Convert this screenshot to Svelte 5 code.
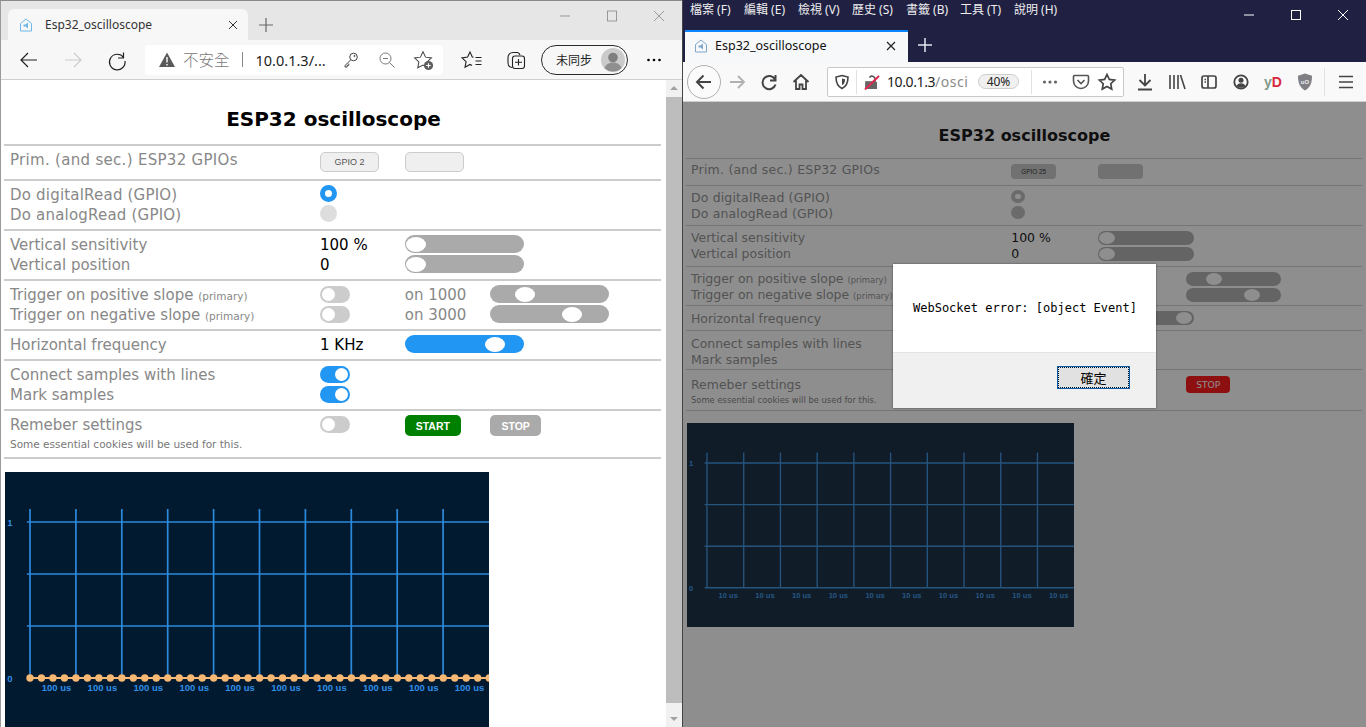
<script>
  const edgeCfg = {
    cls: 'edge', gpio: 'GPIO 2', radio: 'blue', unit: '100 us', dots: true,
    freq: '1 KHz', freqOn: true, freqAt: 80, stopCls: 'stop-off'
  };
  const foxCfg = {
    cls: 'fox', gpio: 'GPIO 25', radio: 'grey', unit: '10 us', dots: false,
    freq: '', freqOn: false, freqAt: 97, stopCls: 'stop-on'
  };

  const verticals = Array.from({ length: 10 }, (_, i) => 25 + i * 45.9);
  const levels = [50, 102, 154, 206];
  const samples = Array.from({ length: 41 }, (_, i) => 25 + i * 11.48);
  const starPath = 'M12 3l2.8 5.9 6.4.8-4.7 4.4 1.2 6.4L12 17.4l-5.7 3.1 1.2-6.4-4.7-4.4 6.4-.8z';
  const menus = ['檔案 (F)', '編輯 (E)', '檢視 (V)', '歷史 (S)', '書籤 (B)', '工具 (T)', '說明 (H)'];
</script>

{#snippet favicon(tone)}
  <svg class="fav" viewBox="0 0 14 14" width="14" height="14" fill="none">
    <path d="M1.5 5.5L7 1l5.5 4.5V13h-11z" stroke={tone} />
    <path d="M4.5 6.5h2l2.5-2v6l-2.5-2h-2z" fill={tone} />
  </svg>
{/snippet}

{#snippet slider(at, on = false)}
  <div class="slider" class:on><span class="thumb" style="margin-left:{at}px"></span></div>
{/snippet}

{#snippet toggle(on = false)}
  <div class="toggle" class:on><span></span></div>
{/snippet}

{#snippet page(cfg)}
  <div class="sheet {cfg.cls}">
    <h1>ESP32 oscilloscope</h1>
    <div class="rows">
      <div class="row first">
        <span class="lab caps">Prim. (and sec.) ESP32 GPIOs</span>
        <button class="gpio val">{cfg.gpio}</button>
        <button class="gpio mid"></button>
      </div>
      <div class="row reads">
        <span class="lab caps2">Do digitalRead (GPIO)</span>
        <span class="radio val sel {cfg.radio}"></span>
        <span class="lab caps2">Do analogRead (GPIO)</span>
        <span class="radio val {cfg.radio}"></span>
      </div>
      <div class="row tall">
        <span class="lab">Vertical sensitivity</span>
        <span class="val dark">100 %</span>
        <div class="mid">{@render slider(1)}</div>
        <span class="lab">Vertical position</span>
        <span class="val dark">0</span>
        <div class="mid">{@render slider(1)}</div>
      </div>
      <div class="row">
        <span class="lab">Trigger on positive slope <small>(primary)</small></span>
        <div class="val">{@render toggle()}</div>
        <span class="mid word">on 1000</span>
        <div class="far">{@render slider(25)}</div>
        <span class="lab">Trigger on negative slope <small>(primary)</small></span>
        <div class="val">{@render toggle()}</div>
        <span class="mid word">on 3000</span>
        <div class="far">{@render slider(72)}</div>
      </div>
      <div class="row tall">
        <span class="lab">Horizontal frequency</span>
        <span class="val dark">{cfg.freq}</span>
        <div class="mid">{@render slider(cfg.freqAt, cfg.freqOn)}</div>
      </div>
      <div class="row">
        <span class="lab">Connect samples with lines</span>
        <div class="val">{@render toggle(true)}</div>
        <span class="lab">Mark samples</span>
        <div class="val">{@render toggle(true)}</div>
      </div>
      <div class="row last">
        <span class="lab">Remeber settings</span>
        <div class="val">{@render toggle()}</div>
        <div class="mid"><button class="cmd start">START</button></div>
        <div class="far"><button class="cmd {cfg.stopCls}">STOP</button></div>
        <span class="lab note">Some essential cookies will be used for this.</span>
      </div>
      <div class="row closing"></div>
    </div>

    <svg class="scope" width="484" height="256" viewBox="0 0 484 256">
      {#each verticals as x}
        <line x1={x} x2={x} y1="37" y2="206" />
      {/each}
      {#each levels as y}
        <line x1="22" x2="484" y1={y} y2={y} />
      {/each}
      <text x="5" y="53.5" class="axis" text-anchor="middle">1</text>
      <text x="5" y="209.5" class="axis" text-anchor="middle">0</text>
      {#each verticals as x}
        <text x={x + 26.5} y="219" class="axis" text-anchor="middle">{cfg.unit}</text>
      {/each}
      {#if cfg.dots}
        <line class="trace" x1="25" x2="484" y1="206" y2="206" />
        {#each samples as x}
          <circle cx={x} cy="206" r="3.7" />
        {/each}
      {/if}
    </svg>
  </div>
{/snippet}

<div class="desktop">
  <section class="edge-win">
    <div class="edge-tabs">
      <div class="edge-tab">
        {@render favicon('#6bb8e8')}
        <span class="edge-title">Esp32_oscilloscope</span>
        <svg class="edge-close" width="10" height="10" viewBox="0 0 10 10"><path d="M1 1l8 8M9 1l-8 8" stroke="#333" fill="none" /></svg>
      </div>
      <svg class="edge-plus" width="14" height="14" viewBox="0 0 14 14"><path d="M7 0v14M0 7h14" stroke="#666" stroke-width="1.2" fill="none" /></svg>
      <div class="caption">
        <svg width="12" height="12" viewBox="0 0 12 12"><path d="M1 6h10" stroke="#999" fill="none" /></svg>
        <svg width="12" height="12" viewBox="0 0 12 12"><rect x="1.5" y="1" width="9" height="10" stroke="#999" fill="none" /></svg>
        <svg width="12" height="12" viewBox="0 0 12 12"><path d="M1 1l10 10M11 1L1 11" stroke="#999" fill="none" /></svg>
      </div>
    </div>

    <div class="edge-bar">
      <span class="slot"><svg width="24" height="24" viewBox="0 0 24 24"><path d="M20 12H4M11 5l-7 7 7 7" stroke="#222" stroke-width="1.2" fill="none" /></svg></span>
      <span class="slot"><svg width="24" height="24" viewBox="0 0 24 24"><path d="M4 12h16M13 5l7 7-7 7" stroke="#ccc" stroke-width="1.2" fill="none" /></svg></span>
      <span class="slot"><svg width="24" height="24" viewBox="0 0 24 24"><path d="M18.5 4.5v5.5H13M18.6 9.5A7.8 7.8 0 1 0 20 13" stroke="#222" stroke-width="1.2" fill="none" /></svg></span>
      <div class="edge-addr">
        <svg class="warn" width="16" height="15" viewBox="0 0 16 15"><path d="M8 .5L16 15H0z" fill="#595959" /><path d="M8 5v5.5M8 12v1.5" stroke="#fff" stroke-width="1.4" fill="none" /></svg>
        <span class="unsafe">不安全</span>
        <span class="pipe"></span>
        <span class="url">10.0.1.3/...</span>
        <span class="addr-icon"><svg width="18" height="18" viewBox="0 0 18 18" fill="none" stroke="#444"><circle cx="11.5" cy="6" r="3.8" /><path d="M8.8 8.8L3 14.5V16h2.2v-1.7h1.6v-1.7" /><circle cx="12.5" cy="5" r=".6" /></svg></span>
        <span class="addr-icon"><svg width="18" height="18" viewBox="0 0 18 18" fill="none" stroke="#777"><circle cx="7.5" cy="7.5" r="5.5" /><path d="M11.5 11.5l5 5M5 7.5h5" /></svg></span>
        <span class="addr-icon"><svg width="22" height="22" viewBox="0 0 24 24"><path d={starPath} fill="none" stroke="#444" stroke-width="1.1" /><circle cx="18" cy="18" r="5" fill="#5e5e5e" /><path d="M18 15.5v5M15.5 18h5" stroke="#fff" stroke-width="1.2" /></svg></span>
      </div>
      <span class="slot"><svg width="24" height="24" viewBox="0 0 24 24" fill="none" stroke="#222" stroke-width="1.1"><path d="M13.5 9.300L12.300 9.100 10 4 7.600 9.100 2 9.900l4.100 3.800L5 19.300l5-2.800 2 1.100" /><path d="M15.500 9.500h6M15.500 13h6M15.500 16.500h6" /></svg></span>
      <span class="slot"><svg width="24" height="24" viewBox="0 0 24 24" fill="none" stroke="#222" stroke-width="1.1"><path d="M8 19.5a4.5 4.5 0 0 1-4-4.5V9.5A5 5 0 0 1 9 4.5h4.5A3.5 3.5 0 0 1 16 7" /><rect x="8.5" y="8" width="12" height="12.5" rx="2.5" /><path d="M14.5 11v6.5M11 14.2h7" /></svg></span>
      <div class="pill">
        <span>未同步</span>
        <svg width="24" height="24" viewBox="0 0 24 24"><circle cx="12" cy="12" r="12" fill="#cbcbcb" /><circle cx="12" cy="9.5" r="4.8" fill="#7f7f7f" /><path d="M3.5 20c1.5-4 5-5.5 8.5-5.5s7 1.500 8.500 5.500a12 12 0 0 1-17 0z" fill="#8f8f8f" /></svg>
      </div>
      <span class="slot more"><svg width="16" height="4" viewBox="0 0 16 4"><circle cx="2.500" cy="2" r="1.300" /><circle cx="8" cy="2" r="1.300" /><circle cx="13.500" cy="2" r="1.300" /></svg></span>
    </div>

    <div class="edge-body">
      {@render page(edgeCfg)}
      <div class="scrollbar">
        <svg width="16" height="16" viewBox="0 0 16 16"><path d="M4 10l4-4 4 4z" fill="#a3a3a3" /></svg>
        <span class="scroll-thumb"></span>
        <svg width="16" height="16" viewBox="0 0 16 16"><path d="M4 6l4 4 4-4z" fill="#a3a3a3" /></svg>
      </div>
    </div>
  </section>

  <section class="fox-win">
    <div class="fox-menu">
      {#each menus as m}
        <span>{m}</span>
      {/each}
      <div class="caption fox-caption">
        <svg width="12" height="12" viewBox="0 0 12 12"><path d="M1 6h10" stroke="#fff" fill="none" /></svg>
        <svg width="12" height="12" viewBox="0 0 12 12"><rect x="1.500" y="1.500" width="9" height="9" stroke="#fff" fill="none" /></svg>
        <svg width="12" height="12" viewBox="0 0 12 12"><path d="M1 1l10 10M11 1L1 11" stroke="#fff" fill="none" /></svg>
      </div>
    </div>

    <div class="fox-tabs">
      <div class="fox-tab">
        {@render favicon('#7fa8cc')}
        <span class="fox-title">Esp32_oscilloscope</span>
        <svg class="fox-close" width="10" height="10" viewBox="0 0 10 10"><path d="M1 1l8 8M9 1l-8 8" stroke="#222" stroke-width="1.200" fill="none" /></svg>
      </div>
      <svg class="fox-plus" width="14" height="14" viewBox="0 0 14 14"><path d="M7 0v14M0 7h14" stroke="#e6e6ee" stroke-width="1.500" fill="none" /></svg>
    </div>

    <div class="fox-bar">
      <span class="back"><svg width="20" height="20" viewBox="0 0 20 20"><path d="M17 10H3M9.500 3.500L3 10l6.500 6.500" stroke="#444" stroke-width="2" fill="none" /></svg></span>
      <span class="fslot"><svg width="18" height="18" viewBox="0 0 18 18"><path d="M2 9h14M10 3l6 6-6 6" stroke="#b1b1b3" stroke-width="1.800" fill="none" /></svg></span>
      <span class="fslot"><svg width="18" height="18" viewBox="0 0 18 18"><path d="M15.500 2v5.500H10M15 6.500A6.600 6.600 0 1 0 15.500 11.500" stroke="#444" stroke-width="2" fill="none" /></svg></span>
      <span class="fslot"><svg width="18" height="18" viewBox="0 0 18 18"><path d="M1.500 9L9 2l7.500 7M4 7.500V16h3.500v-4.500h3V16H14V7.500" stroke="#444" stroke-width="1.800" fill="none" /></svg></span>
      <div class="fox-addr">
        <span class="shield"><svg width="16" height="16" viewBox="0 0 16 16"><path d="M8 1.500l6 1.500c0 6-1.500 9.500-6 11.500C3.500 12.500 2 9 2 3z" fill="none" stroke="#444" stroke-width="1.600" /><path d="M8 4.500l3 .8c0 3-.8 4.800-3 6z" fill="#444" /></svg></span>
        <span class="addr-sep"></span>
        <span class="lock"><svg width="16" height="16" viewBox="0 0 16 16"><path d="M2 15V8h9V5a3 3 0 0 0-5.500-1.500" fill="none" stroke="#555" stroke-width="1.600" /><rect x="2" y="8" width="11" height="7" fill="#666" /><path d="M1 15.500L15 2" stroke="#e22850" stroke-width="2" fill="none" /></svg></span>
        <span class="host">10.0.1.3<em>/osci</em></span>
        <span class="pct">40%</span>
        <span class="addr-sep tail"></span>
        <span class="fdots"><svg width="16" height="4" viewBox="0 0 16 4" fill="#666"><circle cx="2.500" cy="2" r="1.600" /><circle cx="8" cy="2" r="1.600" /><circle cx="13.500" cy="2" r="1.600" /></svg></span>
        <span class="aslot"><svg width="18" height="18" viewBox="0 0 18 18" fill="none" stroke="#555" stroke-width="1.600"><path d="M2.500 2.500h13a1 1 0 0 1 1 1V8a7.500 7.500 0 0 1-15 0V3.500a1 1 0 0 1 1-1z" /><path d="M5.500 7L9 10.500 12.500 7" /></svg></span>
        <span class="aslot"><svg width="20" height="20" viewBox="0 0 24 24"><path d={starPath} fill="none" stroke="#444" stroke-width="2" /></svg></span>
      </div>
      <span class="tool dl"><svg width="18" height="18" viewBox="0 0 18 18" fill="none" stroke="#444" stroke-width="1.800"><path d="M9 1v11M3.500 7L9 12.500 14.500 7M2 16.500h14" /></svg></span>
      <span class="tool"><svg width="18" height="18" viewBox="0 0 18 18" fill="none" stroke="#444" stroke-width="1.600"><path d="M2 2v14M6 2v14M10 2v14M12.500 2l4.500 14" /></svg></span>
      <span class="tool"><svg width="18" height="18" viewBox="0 0 18 18" fill="none" stroke="#444" stroke-width="1.700"><rect x="2" y="3" width="14" height="12" rx="2" /><path d="M8 3v12M4.500 6.500H6M4.500 9H6" /></svg></span>
      <span class="tool"><svg width="16" height="16" viewBox="0 0 16 16"><circle cx="8" cy="8" r="6.700" fill="none" stroke="#444" stroke-width="1.800" /><circle cx="8" cy="6.300" r="2.500" fill="#444" /><path d="M3.500 12c1-2 2.800-2.700 4.500-2.700s3.500.7 4.500 2.700c-2.500 2.300-6.500 2.300-9 0z" fill="#444" /></svg></span>
      <span class="tool yd"><b class="y">y</b><b class="d">D</b></span>
      <span class="tool"><svg width="16" height="18" viewBox="0 0 16 18"><path d="M8 .500l7 2.200c0 7-1.500 11.500-7 14.800C2.500 14.200 1 9.700 1 2.700z" fill="#808084" /><text x="8" y="10.500" class="ub" text-anchor="middle">uO</text></svg></span>
      <span class="tool-sep"></span>
      <span class="tool burger"><svg width="16" height="14" viewBox="0 0 16 14"><path d="M1 1.500h14M1 7h14M1 12.500h14" stroke="#444" stroke-width="1.600" fill="none" /></svg></span>
    </div>

    <div class="fox-body">
      {@render page(foxCfg)}
      <div class="dim">
        <div class="dialog">
          <div class="msg">WebSocket error: [object Event]</div>
          <div class="dialog-foot"><button class="ok">確定</button></div>
        </div>
      </div>
    </div>
  </section>
</div>

<style>
  :global(body) {
    margin: 0;
    background: #333;
  }

  .desktop {
    width: 1366px;
    height: 727px;
    display: flex;
    overflow: hidden;
    font-family: "Noto Sans", "Noto Sans CJK TC", sans-serif;
  }

  svg {
    display: block;
    flex: none;
  }

  /* edge window */
  .edge-win {
    width: 682px;
    height: 727px;
    flex: none;
    display: flex;
    flex-direction: column;
    box-sizing: border-box;
    border-top: 1px solid #8a8a8a;
    border-left: 1px solid #9a9a9a;
  }

  .edge-tabs {
    height: 39px;
    flex: none;
    box-sizing: border-box;
    background: #e6e6e6;
    display: flex;
    align-items: flex-end;
    padding-left: 7px;
  }

  .edge-tab {
    width: 240px;
    height: 31px;
    background: #f7f7f7;
    border-radius: 6px 6px 0 0;
    display: flex;
    align-items: center;
    box-sizing: border-box;
    padding: 0 10px 0 11px;
    font-size: 12px;
    color: #333;
  }

  .edge-title {
    margin-left: 12px;
    flex: 1;
  }

  .edge-plus {
    margin: 0 0 8px 11px;
  }

  .caption {
    margin-left: auto;
    align-self: flex-start;
    display: flex;
    gap: 35px;
    padding: 9px 17px 0 0;
  }

  .edge-bar {
    height: 40px;
    flex: none;
    box-sizing: border-box;
    background: #f7f7f7;
    border-bottom: 1px solid #cfcfcf;
    display: flex;
    align-items: center;
    padding-left: 6px;
  }

  .slot {
    width: 44px;
    height: 30px;
    flex: none;
    display: flex;
    align-items: center;
    justify-content: center;
  }

  .edge-addr {
    width: 298px;
    height: 30px;
    margin: 0 7px 0 6px;
    flex: none;
    background: #fff;
    border-radius: 4px;
    display: flex;
    align-items: center;
    padding-left: 14px;
    box-sizing: border-box;
  }

  .unsafe {
    margin-left: 8px;
    font-size: 15.500px;
    color: #777;
    font-weight: 300;
  }

  .pipe {
    width: 1px;
    height: 15px;
    background: #888;
    margin: 0 13px 0 12px;
  }

  .url {
    font-size: 14.500px;
    color: #222;
    width: 77px;
    white-space: nowrap;
  }

  .addr-icon {
    width: 36px;
    flex: none;
    display: flex;
    justify-content: center;
  }

  .pill {
    width: 87px;
    height: 30px;
    flex: none;
    box-sizing: border-box;
    margin-left: 3px;
    border: 1.5px solid #2a2a2a;
    border-radius: 15px;
    display: flex;
    align-items: center;
    padding-left: 14px;
    gap: 9px;
    font-size: 12px;
    color: #222;
    white-space: nowrap;
  }

  .more {
    margin-left: 4px;
  }

  .edge-body {
    flex: 1;
    display: flex;
    min-height: 0;
    background: #fff;
  }

  .edge-body .sheet {
    flex: 1;
    min-width: 0;
  }

  .scrollbar {
    width: 16px;
    flex: none;
    background: #f1f1f1;
    display: flex;
    flex-direction: column;
  }

  .scroll-thumb {
    flex: 1;
    background: #bdbdbd;
    margin: 1px 0 8px;
  }

  /* firefox window */
  .fox-win {
    width: 684px;
    height: 727px;
    flex: none;
    display: flex;
    flex-direction: column;
    border-left: 1px solid #444;
    box-sizing: border-box;
  }

  .fox-menu {
    height: 30px;
    flex: none;
    background: #1f2042;
    color: #eee;
    font-size: 12px;
    display: flex;
    gap: 13px;
    padding-left: 7px;
    padding-top: 2px;
    box-sizing: border-box;
    line-height: 16px;
  }

  .fox-menu > span {
    width: 41px;
    white-space: nowrap;
  }

  .fox-caption {
    padding: 7px 17px 0 0;
    gap: 35px;
  }

  .fox-tabs {
    height: 32px;
    flex: none;
    background: #1f2042;
    display: flex;
    align-items: center;
    padding-left: 2px;
  }

  .fox-tab {
    width: 223px;
    height: 32px;
    background: #f7f8f9;
    border-top: 2px solid #0a84ff;
    box-sizing: border-box;
    display: flex;
    align-items: center;
    padding: 0 12px 3px 9px;
    font-size: 12.500px;
    color: #111;
  }

  .fox-title {
    margin-left: 7px;
    flex: 1;
  }

  .fox-plus {
    margin: 0 0 2px 10px;
  }

  .fox-bar {
    height: 40px;
    flex: none;
    box-sizing: border-box;
    background: #f9f9fa;
    border-bottom: 1px solid #cfcfd1;
    display: flex;
    align-items: center;
    padding-left: 4px;
  }

  .back {
    width: 34px;
    height: 34px;
    flex: none;
    box-sizing: border-box;
    border: 1px solid #b1b1b3;
    border-radius: 50%;
    display: flex;
    align-items: center;
    justify-content: center;
    background: #fbfbfb;
  }

  .fslot {
    width: 32px;
    flex: none;
    display: flex;
    justify-content: center;
  }

  .fox-addr {
    width: 297px;
    height: 30px;
    flex: none;
    margin-left: 10px;
    box-sizing: border-box;
    background: #fff;
    border: 1px solid #c8c8ca;
    border-radius: 2px;
    display: flex;
    align-items: center;
  }

  .fox-addr > span {
    flex: none;
  }

  .shield {
    width: 28px;
    display: flex;
    justify-content: center;
  }

  .addr-sep {
    width: 1px;
    height: 24px;
    background: #e2e2e3;
  }

  .lock {
    margin-left: 7px;
    width: 22px;
  }

  .host {
    font-size: 14px;
    letter-spacing: -0.4px;
    color: #222;
    width: 83px;
    margin-right: 8px;
    white-space: nowrap;
    overflow: hidden;
    margin-left: 1px;
  }

  .host em {
    font-style: normal;
    letter-spacing: 0.5px;
    color: #8a8a8a;
  }

  .pct {
    width: 41px;
    height: 15px;
    box-sizing: border-box;
    line-height: 13px;
    text-align: center;
    border: 1px solid #ccc;
    border-radius: 8px;
    background: #f0f0f0;
    font-size: 12px;
    color: #222;
  }

  .tail {
    margin-left: 12px;
  }

  .fdots {
    width: 36px;
    display: flex;
    justify-content: center;
  }

  .aslot {
    width: 26px;
    display: flex;
    justify-content: center;
  }

  .tool {
    width: 32px;
    flex: none;
    display: flex;
    justify-content: center;
  }

  .dl {
    margin-left: 5px;
  }

  .yd {
    font: bold 14px "Liberation Sans", sans-serif;
  }

  .y {
    color: #7f9a8a;
  }

  .d {
    color: #d9283c;
  }

  .ub {
    font: bold 6px "Liberation Sans", sans-serif;
    fill: #eee;
  }

  .tool-sep {
    width: 1px;
    height: 28px;
    background: #e2e2e3;
    margin: 0 5px 0 3px;
  }

  .burger {
    width: 32px;
  }

  .fox-body {
    flex: 1;
    min-height: 0;
    position: relative;
    background: #fff;
    overflow: hidden;
  }

  .dim {
    position: absolute;
    inset: 0;
    background: rgba(29, 29, 29, 0.5);
  }

  .dialog {
    position: absolute;
    left: 210px;
    top: 162px;
    width: 263px;
    height: 144px;
    background: #fff;
    box-shadow: 0 0 2px rgba(0, 0, 0, 0.5);
    display: flex;
    flex-direction: column;
  }

  .msg {
    flex: 1;
    padding: 36px 0 0 20px;
    font: 12px/16px "DejaVu Sans Mono", monospace;
    color: #000;
    box-sizing: border-box;
    white-space: nowrap;
  }

  .dialog-foot {
    height: 56px;
    flex: none;
    box-sizing: border-box;
    background: #f0f0f0;
    border-top: 1px solid #e4e4e4;
    display: flex;
    justify-content: flex-end;
    padding: 13px 26px 0 0;
  }

  .ok {
    width: 73px;
    height: 23px;
    padding: 0;
    background: #e1e1e1;
    border: 1px solid #0a5aa8;
    outline: 1px dotted #111;
    outline-offset: -2px;
    box-shadow: inset 0 0 0 1px #cfe6fb;
    font: 13px "Noto Sans CJK TC", sans-serif;
    color: #000;
  }

  /* the page under test */
  .sheet {
    font-family: "DejaVu Sans", Verdana, sans-serif;
    font-size: 15px;
    color: #888;
    background: #fff;
    overflow: hidden;
  }

  .sheet.fox {
    zoom: 0.8;
    height: 100%;
    font-size: 15.600px;
  }

  h1 {
    margin: 0;
    padding: 26px 0 12px;
    font-size: 20px;
    line-height: 26px;
    font-weight: bold;
    text-align: center;
    color: #000;
  }

  .fox h1 {
    padding-top: 30px;
    padding-bottom: 14px;
  }

  .rows {
    margin: 0 5px 0 4px;
  }

  .edge .rows {
    margin-left: 3px;
  }

  .row {
    display: grid;
    grid-template-columns: 48.100% 12.900% 13% 1fr;
    grid-auto-rows: 20px;
    align-items: center;
    border-top: 2px solid #ccc;
    padding: 3px 0 5px;
    white-space: nowrap;
  }

  .fox .row {
    padding: 4px 0;
  }

  .fox .row.tall {
    padding-bottom: 6px;
  }

  .fox .row.reads {
    padding-bottom: 5px;
  }

  .row.first,
  .fox .row.first {
    padding: 6px 0 7px;
  }

  .fox .row.first {
    padding-bottom: 6px;
  }

  .row.last {
    padding-bottom: 4px;
    grid-auto-rows: auto;
  }

  .fox .row.last {
    padding-top: 4px;
    padding-bottom: 3px;
  }

  .row.closing,
  .fox .row.closing {
    padding: 0;
    display: block;
  }

  .lab {
    grid-column: 1;
    padding: 2px 0 0 6px;
  }

  .first .lab {
    padding: 0 0 4px 6px;
  }

  .fox .first .lab {
    padding-bottom: 6px;
  }

  .edge .last .lab {
    padding-top: 0;
  }

  .edge .last .val {
    align-self: start;
    margin-top: 2px;
  }

  .caps {
    letter-spacing: 0.3px;
  }

  .caps2 {
    letter-spacing: 0.2px;
  }

  .val {
    grid-column: 2;
  }

  .mid {
    grid-column: 3;
  }

  .far {
    grid-column: 4;
  }

  .fox div.mid,
  .fox div.far {
    padding-top: 2px;
  }

  .dark,
  .word {
    color: #000;
    padding-top: 2px;
  }

  .word {
    color: #888;
  }

  small {
    font-size: 10.500px;
  }

  .lab.note {
    font-size: 10.500px;
    line-height: 17px;
    padding-top: 0;
    color: #777;
  }

  .fox .lab.note {
    line-height: 18px;
  }

  .gpio {
    width: 59px;
    height: 20px;
    padding: 0;
    box-sizing: border-box;
    border: 1px solid #ccc;
    border-radius: 5px;
    background: #efefef;
    color: #555;
    font: 9px "Liberation Sans", sans-serif;
  }

  .fox .gpio {
    width: 56px;
    height: 19px;
    border: 0;
    background: #c4c4c4;
    color: #222;
    font-size: 8px;
  }

  .radio {
    width: 17px;
    height: 17px;
    box-sizing: border-box;
    border-radius: 50%;
    background: #ddd;
    margin-top: -2px;
  }

  .radio.sel {
    border: 5px solid #2196f3;
    background: #fff;
  }

  .radio.grey {
    background: #b8b8b8;
    margin-top: -0.800px;
  }

  .radio.grey.sel {
    background: #fff;
    border-color: #b8b8b8;
  }

  .slider {
    width: 119px;
    height: 18px;
    border-radius: 9px;
    background: #aaa;
    display: flex;
    align-items: center;
  }

  .slider.on {
    background: #2196f3;
  }

  .thumb {
    width: 20px;
    height: 15px;
    border-radius: 50%;
    background: #fff;
  }

  .toggle {
    width: 30px;
    height: 17px;
    border-radius: 9px;
    background: #ccc;
    display: flex;
    align-items: center;
    padding: 0 2px;
    box-sizing: border-box;
  }

  .toggle span {
    width: 13px;
    height: 13px;
    border-radius: 50%;
    background: #fff;
  }

  .toggle.on {
    background: #2196f3;
    justify-content: flex-end;
  }

  .cmd {
    height: 21px;
    display: block;
    margin-top: 1px;
    padding: 0;
    border: 0;
    border-radius: 5px;
    color: #fff;
    font: bold 10.500px "Liberation Sans", sans-serif;
  }

  .start {
    width: 56px;
    background: #008000;
  }

  .stop-off {
    width: 51px;
    background: #aaa;
  }

  .stop-on {
    width: 55px;
    background: #f00;
    font: 11.500px "DejaVu Sans", sans-serif;
  }

  .fox .start {
    background: #aaa;
  }

  .scope {
    margin: 13px 0 0 5px;
    background: #021a30;
  }

  .edge .scope {
    margin-left: 4px;
  }

  .fox .scope {
    margin-top: 15px;
  }

  .scope line {
    stroke: #2c8ade;
    stroke-width: 1.700;
  }

  .scope .trace {
    stroke: #f6b873;
    stroke-width: 2;
  }

  .scope circle {
    fill: #f6b873;
  }

  .axis {
    font: bold 9.500px "Liberation Sans", sans-serif;
    fill: #2f8fe6;
  }
</style>
